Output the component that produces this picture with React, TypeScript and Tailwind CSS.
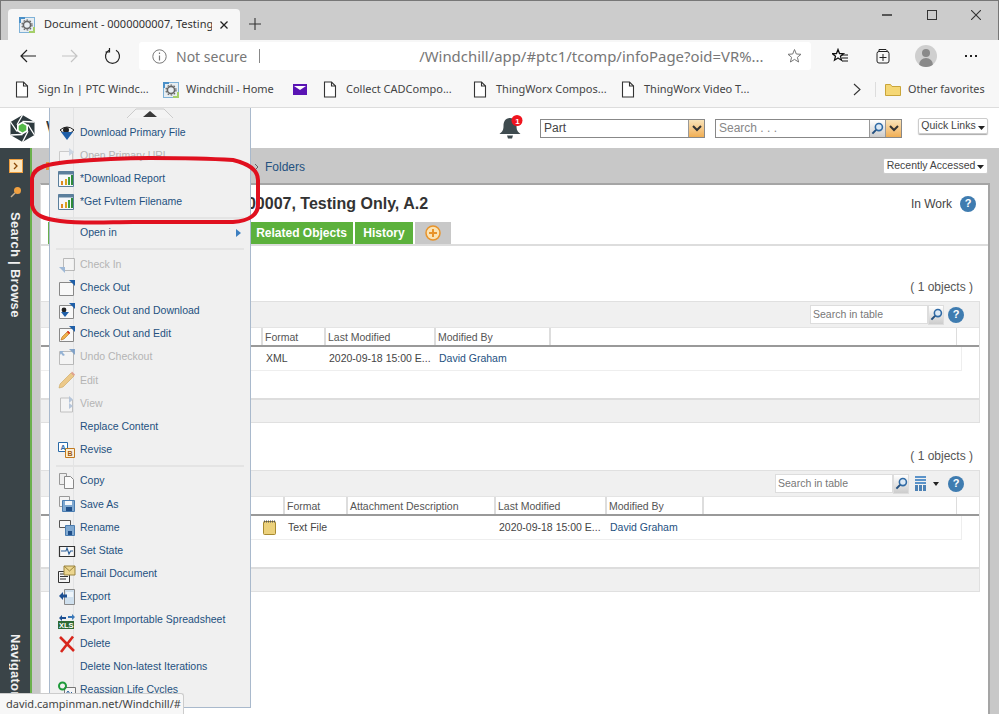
import React from "react";

const Favicon = () => (
  <svg width="16" height="16" viewBox="0 0 16 16" className="shrink-0">
    <rect x="0.5" y="0.5" width="15" height="15" fill="#e8eef2" stroke="#7fb2d8" />
    <path d="M0 0h6v2H2v4H0z" fill="#4a90c8" />
    <path d="M16 16h-6v-2h4v-4h2z" fill="#a5cf6a" />
    <circle cx="8" cy="8" r="3.6" fill="none" stroke="#666" strokeWidth="1.6" />
    <circle cx="8" cy="8" r="5" fill="none" stroke="#666" strokeWidth="1.2" strokeDasharray="1.6 1.6" />
  </svg>
);

const Doc = () => (
  <svg width="14" height="17" viewBox="0 0 14 17" className="shrink-0">
    <path d="M1.500 1h7l4 4v11h-11z" fill="#fff" stroke="#333" strokeWidth="1.100" />
    <path d="M8.500 1v4h4" fill="none" stroke="#333" strokeWidth="1.100" />
  </svg>
);

const Magnifier = () => (
  <svg width="13" height="13" viewBox="0 0 14 14">
    <circle cx="8.500" cy="5.500" r="3.800" fill="#dce9f5" stroke="#2f6aa5" strokeWidth="1.700" />
    <path d="M5.500 8.500 1.500 12.500" stroke="#24507f" strokeWidth="2.200" />
  </svg>
);

const OrangeDrop = () => (
  <div className="flex h-full w-[16px] items-center justify-center border-l border-[#999] bg-gradient-to-b from-[#f9e3b8] to-[#f0ae52]">
    <svg width="10" height="7" viewBox="0 0 10 7">
      <path d="M1 1l4 4 4-4" fill="none" stroke="#333" strokeWidth="2" />
    </svg>
  </div>
);

const Help = () => (
  <div className="flex h-[16px] w-[16px] items-center justify-center rounded-full bg-[#3f7cb0] text-[11px] font-bold leading-none text-white">?</div>
);

const Caret = () => (
  <svg width="7" height="4" viewBox="0 0 7 4" className="ml-[2px] mt-[3px] inline-block align-middle">
    <path d="M0 0h7L3.500 4z" fill="#222" />
  </svg>
);

const S = ({ children }: { children: React.ReactNode }) => (
  <svg width="18" height="18" viewBox="0 0 18 18" className="shrink-0">{children}</svg>
);
const Tri = ({ o = 1 }: { o?: number }) => <path d="M11 1h6v6z" fill="#1f5fa8" opacity={o} />;
const Page = () => <path d="M1.500 3.500h14v13h-14z" fill="#f8f8f8" stroke="#888" />;

const icons: Record<string, React.ReactNode> = {
  download: (
    <S>
      <path d="M2 6q7-6 14 0l-7 6z" fill="#f4f4f4" stroke="#222" />
      <circle cx="8" cy="6" r="3" fill="#222" />
      <path d="M3 8h12l-6 8z" fill="#1f5fa8" />
    </S>
  ),
  url: (
    <S>
      <g opacity=".35">
        <path d="M1.500 4.500h13v11h-13z" fill="#fff" stroke="#888" />
        <path d="M11 1l5 4-5 4z" fill="#8aa8cc" />
      </g>
    </S>
  ),
  chart: (
    <S>
      <path d="M.5 1.500h15v15H.5z" fill="#f5f7fa" stroke="#5b7f9c" />
      <path d="M.5 1.500h15v3H.5z" fill="#5b7f9c" />
      <path d="M3 11h2v4H3z" fill="#e08a1e" />
      <path d="M7 9h2v6H7z" fill="#d9a21f" />
      <path d="M10 7h2v8h-2z" fill="#3fa03f" />
      <path d="M13 5h2v10h-2z" fill="#2e8b3a" />
    </S>
  ),
  checkin: (
    <S>
      <g opacity=".45">
        <path d="M5.500 2.500h11v12h-11z" fill="#fafafa" stroke="#777" />
        <path d="M1 11h6v6z" fill="#3c76b8" />
      </g>
    </S>
  ),
  checkout: (
    <S>
      <Page />
      <Tri />
    </S>
  ),
  checkoutdl: (
    <S>
      <Page />
      <Tri />
      <circle cx="6" cy="8" r="2.400" fill="#222" />
      <path d="M3 10h8l-4 5z" fill="#1f5fa8" />
    </S>
  ),
  checkoutedit: (
    <S>
      <Page />
      <Tri />
      <path d="M3 15l1-3 6-6 2 2-6 6z" fill="#eeb04a" stroke="#b56a18" strokeWidth=".6" />
      <path d="M9 7l2 2 1-1-2-2z" fill="#d22" />
    </S>
  ),
  undo: (
    <S>
      <g opacity=".5">
        <Page />
        <Tri />
        <path d="M2 3l4 0-1.500 1.500L7 7 5 8 3 5.500 2 7z" fill="#3c76b8" />
      </g>
    </S>
  ),
  edit: (
    <S>
      <path d="M1 17l1-4L13 2l3 3L5 16z" fill="#ecc98a" stroke="#c9a45d" strokeWidth=".6" />
      <path d="M13 2l3 3 1-1.500-3-3z" fill="#e0a090" />
    </S>
  ),
  view: (
    <S>
      <g opacity=".45">
        <path d="M2.500 3h9l3 2v12h-12z" fill="#fafafa" stroke="#888" />
        <path d="M11 1l4 3.500-4 3.500z" fill="#6f93c0" />
        <path d="M11 8l4 3-4 3z" fill="#6f93c0" />
      </g>
    </S>
  ),
  revise: (
    <S>
      <path d="M.5 1.500h9v9h-9z" fill="#fff" stroke="#2a6aa8" />
      <path d="M7.500 7.500h9v9h-9z" fill="#fbeed6" stroke="#c07a22" />
      <text x="2.500" y="9" fontSize="7" fontWeight="700" fill="#2a6aa8" fontFamily="Liberation Sans">A</text>
      <text x="9.500" y="15" fontSize="7" fontWeight="700" fill="#a05a10" fontFamily="Liberation Sans">B</text>
    </S>
  ),
  copy: (
    <S>
      <path d="M1.500 1.500h7v11h-7z" fill="#eee" stroke="#999" />
      <path d="M6.500 4.500h6l3 3v9h-9z" fill="#fafafa" stroke="#888" />
    </S>
  ),
  saveas: (
    <S>
      <path d="M1.500 1.500h10v10h-10z" fill="#f4f4f4" stroke="#999" />
      <path d="M4.500 5.500h12v11h-12z" fill="#7fa8d0" stroke="#4a7cb0" />
      <path d="M7 6h7v4H7z" fill="#f4f7fb" />
      <path d="M8 12h6v4H8z" fill="#1f4f8a" />
    </S>
  ),
  rename: (
    <S>
      <path d="M1.500 1.500h11v7h-11z" fill="#f7f7f7" stroke="#555" />
      <path d="M7.500 6.500h9v10h-9z" fill="#7fa8d0" stroke="#4a7cb0" />
      <path d="M10 12h4v4h-4z" fill="#1f4f8a" />
    </S>
  ),
  state: (
    <S>
      <path d="M1.500 4.500h15v10h-15z" fill="#f7f7f7" stroke="#333" strokeWidth="1.200" />
      <path d="M3 9h5l1-3 2 6 1.500-3H15" fill="none" stroke="#2a5f99" strokeWidth="1.100" />
    </S>
  ),
  email: (
    <S>
      <path d="M.5 6.500h11v11H.5z" fill="#f5f5f5" stroke="#333" />
      <path d="M2 9h8M2 11.500h8M2 14h6" stroke="#333" />
      <path d="M6 1h11v9H6z" fill="#ecd68f" stroke="#9a8440" />
      <path d="M6 1l5.500 5L17 1" fill="none" stroke="#9a8440" />
    </S>
  ),
  export: (
    <S>
      <path d="M6.500 1.500h10v15h-10z" fill="#cfe0ee" stroke="#888" />
      <path d="M8 4h7v5H8z" fill="#eef5fa" />
      <path d="M1 8l4-4v2.500h4v3H5V12z" fill="#1b4f92" />
    </S>
  ),
  xls: (
    <S>
      <path d="M1 7l3-3v2h4v2H4v2z" fill="#1b4f92" />
      <path d="M17 6l-3-3v2h-4v2h4v2z" fill="#3a78b8" />
      <rect x="0" y="10" width="16" height="8" fill="#2e6a35" />
      <text x="1" y="17" fontSize="7.500" fontWeight="700" fill="#fff" fontFamily="Liberation Sans">XLS</text>
    </S>
  ),
  del: (
    <S>
      <path d="M2 2l14 14M15 1.500 3 17" stroke="#d8261c" strokeWidth="2.600" />
    </S>
  ),
  life: (
    <S>
      <path d="M6.500 6.500h11v10h-11z" fill="#f4f4f4" stroke="#777" />
      <path d="M8 13l2-3 2 3 2-2" fill="none" stroke="#2a5f99" />
      <circle cx="4.500" cy="5" r="3.500" fill="none" stroke="#1e9a3a" strokeWidth="2" />
    </S>
  ),
};

type Entry = { t: string; i?: string; off?: boolean; sub?: boolean } | "sep";

const menu: Entry[] = [
  { t: "Download Primary File", i: "download" },
  { t: "Open Primary URL", i: "url", off: true },
  { t: "*Download Report", i: "chart" },
  { t: "*Get FvItem Filename", i: "chart" },
  "sep",
  { t: "Open in", sub: true },
  "sep",
  { t: "Check In", i: "checkin", off: true },
  { t: "Check Out", i: "checkout" },
  { t: "Check Out and Download", i: "checkoutdl" },
  { t: "Check Out and Edit", i: "checkoutedit" },
  { t: "Undo Checkout", i: "undo", off: true },
  { t: "Edit", i: "edit", off: true },
  { t: "View", i: "view", off: true },
  { t: "Replace Content" },
  { t: "Revise", i: "revise" },
  "sep",
  { t: "Copy", i: "copy" },
  { t: "Save As", i: "saveas" },
  { t: "Rename", i: "rename" },
  { t: "Set State", i: "state" },
  { t: "Email Document", i: "email" },
  { t: "Export", i: "export" },
  { t: "Export Importable Spreadsheet", i: "xls" },
  { t: "Delete", i: "del" },
  { t: "Delete Non-latest Iterations" },
  { t: "Reassign Life Cycles", i: "life" },
];

const ContextMenu = () => (
  <div className="absolute left-[49px] top-[108px] z-10 h-[600px] w-[202px] overflow-hidden border-x border-b border-x-[#a9b9cc] border-b-[#a9b9cc] bg-[#f0f0f0]">
    <div className="absolute bottom-0 left-[23px] top-0 w-px bg-[#e2e3e4]" />
    <div className="relative flex h-[13px] justify-center">
      <svg width="46" height="11" viewBox="0 0 46 11">
        <path d="M0 10 9 1h28l9 9" fill="#f4f4f4" stroke="#ccc" />
        <path d="M16 9 23 3l7 6z" fill="#3a3a3a" />
      </svg>
    </div>
    {menu.map((m, idx) =>
      m === "sep" ? (
        <div key={idx} className="relative flex h-[8px] items-center px-[6px]">
          <div className="h-[2px] w-full bg-[#e4e4e4]" />
        </div>
      ) : (
        <div key={idx} className="relative flex h-[23.2px] items-center">
          <div className="flex w-[30px] justify-end pr-[4px]">{m.i ? icons[m.i] : null}</div>
          <span className={`whitespace-nowrap text-[10.5px] ${m.off ? "text-[#b4b4b4]" : "text-[#24517f]"}`}>{m.t}</span>
          {m.sub ? (
            <div className="absolute right-[9px] h-0 w-0 border-y-[4px] border-l-[5px] border-y-transparent border-l-[#3c7fc0]" />
          ) : null}
        </div>
      ),
    )}
  </div>
);

type Col = { t: string; w: number };

const Section = ({
  cols,
  first,
  cells,
  grid,
  noteIcon,
}: {
  cols: Col[];
  first: number;
  cells: { t: string; link?: boolean }[];
  grid?: boolean;
  noteIcon?: boolean;
}) => (
  <div>
    <div className="flex h-[16px] items-center justify-end pr-[15px] text-[12px] text-[#555]">( 1 objects )</div>
    <div className="mr-[8px] mt-[6px] border-y border-r border-[#e0e0e0]">
      <div className="flex h-[25px] items-center justify-end bg-[#f0f0f0] pr-[15px]">
        <div className="flex h-[19px] w-[118px] items-center border border-[#ddd] bg-white px-[2px] text-[10.5px] text-[#777]">Search in table</div>
        <div className="flex h-[20px] w-[16px] items-center justify-center border border-[#ddd] bg-gradient-to-b from-white to-[#ccc]">
          <Magnifier />
        </div>
        {grid ? (
          <div className="ml-[6px] flex items-center">
            <svg width="11" height="15" viewBox="0 0 11 15">
              <path d="M0 0h11v2H0zM0 3h11v2H0zM0 6h11v2H0z" fill="#5b93c9" />
              <path d="M0 9h3v6H0zM4 9h3v6H4zM8 9h3v6H8z" fill="#4d82b5" />
            </svg>
            <svg width="6" height="4" viewBox="0 0 6 4" className="ml-[7px]">
              <path d="M0 0h6L3 4z" fill="#222" />
            </svg>
          </div>
        ) : null}
        <div className={grid ? "ml-[9px]" : "ml-[4px]"}>
          <Help />
        </div>
      </div>
      <div className="flex h-[20px] border-b-2 border-t border-[#e4e4e4] border-b-[#999] bg-white text-[10.5px] text-[#555]">
        <div style={{ width: first }} className="shrink-0 border-r-2 border-[#ddd]" />
        {cols.map((c) => (
          <div key={c.t} style={{ width: c.w }} className="flex shrink-0 items-center border-r-2 border-[#ddd] pl-[2px] pt-[2px]">{c.t}</div>
        ))}
        <div className="mr-[22px] flex-1 border-r border-[#ddd]" />
      </div>
      <div className="h-[51px] bg-white">
        <div className="mr-[17px] flex h-[24px] items-center border-b border-r border-[#eee] text-[10.5px] text-[#444]">
          <div style={{ width: first }} className="flex shrink-0 items-center justify-end pr-[9px]">
            {noteIcon ? (
              <svg width="13" height="15" viewBox="0 0 13 15">
                <rect x=".5" y="1.500" width="12" height="13" rx="1" fill="#ecd17c" stroke="#a88a30" />
                <path d="M1 1.500h11" stroke="#555" strokeDasharray="1 1" strokeWidth="2" />
              </svg>
            ) : null}
          </div>
          {cells.map((c, i) => (
            <div key={i} style={{ width: cols[i].w }} className={`shrink-0 overflow-hidden whitespace-nowrap pl-[3px] ${c.link ? "text-[#24517f]" : ""}`}>{c.t}</div>
          ))}
        </div>
      </div>
      <div className="h-[24px] border-t-2 border-[#ddd] bg-[#f0f0f0]" />
    </div>
  </div>
);

export default function App() {
  return (
    <div className="relative flex h-[714px] w-[999px] flex-col overflow-hidden bg-white [font-family:'Liberation_Sans',Arial,sans-serif]">
      {/* browser chrome */}
      <div className="[font-family:'Noto_Sans','Open_Sans',sans-serif]">
        <div className="flex h-[40px] items-end border-l border-r border-t border-[#777] bg-[#cccccc]">
          <div className="ml-[7px] flex h-[31px] w-[232px] items-center rounded-t-[4px] bg-[#f7f7f7] pl-[11px] text-[11px] text-[#333]">
            <Favicon />
            <span className="ml-[9px] w-[168px] overflow-hidden whitespace-nowrap">Document - 0000000007, Testing</span>
            <svg width="10" height="10" viewBox="0 0 10 10" className="ml-[7px]">
              <path d="M1.500 1.500l7 7M8.500 1.500l-7 7" stroke="#222" strokeWidth="1.300" />
            </svg>
          </div>
          <svg width="14" height="14" viewBox="0 0 14 14" className="mb-[9px] ml-[8px]">
            <path d="M7 1v12M1 7h12" stroke="#333" strokeWidth="1.100" />
          </svg>
          <div className="mb-[20px] ml-auto flex items-center">
            <div className="h-[2px] w-[10px] bg-[#555]" />
            <div className="ml-[35px] h-[10px] w-[10px] border-[1.5px] border-[#333]" />
            <svg width="10" height="10" viewBox="0 0 10 10" className="ml-[34px] mr-[17px]">
              <path d="M0 0l10 10M10 0 0 10" stroke="#333" strokeWidth="1.100" />
            </svg>
          </div>
        </div>
        <div className="flex h-[32px] items-center bg-[#f7f7f7] pl-[20px]">
          <svg width="16" height="14" viewBox="0 0 16 14">
            <path d="M16 7H1M7 1 1 7l6 6" fill="none" stroke="#222" strokeWidth="1.200" />
          </svg>
          <svg width="16" height="14" viewBox="0 0 16 14" className="ml-[26px]">
            <path d="M0 7h15M9 1l6 6-6 6" fill="none" stroke="#c4c4c4" strokeWidth="1.200" />
          </svg>
          <svg width="17" height="17" viewBox="0 0 17 17" className="ml-[26px]">
            <path d="M5 2.300a7 7 0 1 0 7 0" fill="none" stroke="#222" strokeWidth="1.200" />
            <path d="M5.500 1v4H1.500" fill="none" stroke="#222" strokeWidth="1.200" transform="translate(0 -1)" />
          </svg>
          <div className="ml-[18px] flex h-[28px] w-[672px] items-center rounded-[3px] bg-white pl-[13px] text-[#777]">
            <svg width="15" height="15" viewBox="0 0 15 15">
              <circle cx="7.500" cy="7.500" r="6.700" fill="none" stroke="#777" />
              <path d="M7.500 6.500v5M7.500 3.500v1.500" stroke="#777" strokeWidth="1.200" />
            </svg>
            <span className="ml-[9px] text-[14px]">Not secure</span>
            <div className="ml-[12px] h-[14px] w-px bg-[#888]" />
            <span className="ml-[159px] whitespace-nowrap text-[14.9px]">/Windchill/app/#ptc1/tcomp/infoPage?oid=VR%...</span>
            <svg width="16" height="16" viewBox="0 0 16 16" className="ml-[23px]">
              <path d="M7.500 1.500 9.300 6l4.700.3-3.600 3 1.200 4.700-4.100-2.600L3.400 14l1.200-4.700L1 6.300 5.700 6z" fill="none" stroke="#777" />
            </svg>
          </div>
          <svg width="16" height="16" viewBox="0 0 16 16" className="ml-[21px]">
            <path d="M6 1.500 7.500 5.500l4 .2-3 2.600 1 3.900L6 10l-3.500 2.200 1-3.900-3-2.600 4-.2z" fill="#fff" stroke="#111" strokeWidth="1.300" />
            <path d="M10 7h6M10 10h6M10 13h6" stroke="#111" />
          </svg>
          <svg width="16" height="16" viewBox="0 0 16 16" className="ml-[28px]">
            <path d="M3 3.500V1.500h7l2 2" fill="none" stroke="#222" />
            <rect x="1" y="3.500" width="12" height="11.500" rx="2" fill="none" stroke="#222" />
            <path d="M7 6v7M3.500 9.500h7" stroke="#222" />
          </svg>
          <div className="relative ml-[23px] h-[22px] w-[22px] overflow-hidden rounded-full bg-[#cfcfcf]">
            <div className="absolute left-[7px] top-[4px] h-[8px] w-[8px] rounded-full bg-[#8a8a8a]" />
            <div className="absolute left-[4px] top-[13px] h-[10px] w-[14px] rounded-t-[7px] bg-[#8a8a8a]" />
          </div>
          <div className="ml-[28px] flex gap-[3px]">
            <div className="h-[2px] w-[2px] bg-[#222]" />
            <div className="h-[2px] w-[2px] bg-[#222]" />
            <div className="h-[2px] w-[2px] bg-[#222]" />
          </div>
        </div>
        <div className="flex h-[36px] items-center border-b border-[#ddd] bg-[#f7f7f7] pl-[15px] text-[11px] text-[#444]">
          <Doc />
          <span className="ml-[9px] w-[125px] whitespace-nowrap">Sign In | PTC Windc...</span>
          <Favicon />
          <span className="ml-[7px] w-[107px] whitespace-nowrap">Windchill - Home</span>
          <svg width="14" height="11" viewBox="0 0 14 11">
            <rect width="14" height="11" fill="#5a14b4" />
            <path d="M1 2l6 4 6-4" fill="#fff" />
          </svg>
          <div className="ml-[16px]"><Doc /></div>
          <span className="ml-[9px] w-[127px] whitespace-nowrap">Collect CADCompo...</span>
          <Doc />
          <span className="ml-[9px] w-[125px] whitespace-nowrap">ThingWorx Compos...</span>
          <Doc />
          <span className="ml-[9px] w-[209px] whitespace-nowrap">ThingWorx Video T...</span>
          <svg width="8" height="13" viewBox="0 0 8 13">
            <path d="M1 1l6 5.500-6 5.500" fill="none" stroke="#333" strokeWidth="1.100" />
          </svg>
          <div className="ml-[14px] h-[15px] w-px bg-[#ddd]" />
          <svg width="16" height="13" viewBox="0 0 16 13" className="ml-[9px]">
            <path d="M.5 1.500h5l1.500 2h8.500v9H.5z" fill="#f5d775" stroke="#c9a53a" />
          </svg>
          <span className="ml-[7px] whitespace-nowrap text-[10.8px]">Other favorites</span>
        </div>
      </div>

      {/* app header */}
      <div className="flex h-[40px] items-center bg-white pl-[9px]">
        <svg width="27" height="29" viewBox="0 0 27 29" className="shrink-0">
          <path d="M13.500 1 25.500 8v13l-12 7-12-7V8z" fill="#2d3a3e" />
          <path d="M13.500 7.500 19 10.700v6.600l-5.500 3.200L8 17.300v-6.600z" fill="#fff" />
          <path d="M13.500 9.500l3.800 2.200v4.600l-3.800 2.200-3.800-2.200v-4.600z" fill="#54b948" />
          <path d="M13.500 1 8 10.700M25.500 8 13.500 7.500M25.500 21 19 10.700M13.500 28 19 17.300M1.500 21 13.500 20.500M1.500 8 8 17.300" stroke="#fff" strokeWidth="1.300" />
        </svg>
        <div className="ml-[10px] h-[24px] w-[30px] shrink-0 overflow-hidden text-[20px] leading-[24px] text-[#2d3a3e]">Windchill</div>
        <svg width="24" height="25" viewBox="0 0 24 25" className="ml-[423px] mt-[-1px] shrink-0">
          <path d="M11 3c5 0 6.500 4 6.500 8s1 5.500 4 8H.5c3-2.500 4-4 4-8S6 3 11 3z" fill="#3f4b4f" />
          <path d="M8 20.500h6l-1 3H9z" fill="#3f4b4f" />
          <circle cx="18" cy="5.500" r="5.500" fill="#f0141e" />
          <text x="16.300" y="8.500" fontSize="8" fontWeight="700" fill="#fff" fontFamily="Liberation Sans">1</text>
        </svg>
        <div className="ml-[17px] flex h-[19px] w-[165px] items-center border border-[#888] bg-white text-[12px] text-[#444]">
          <span className="flex-1 pl-[3px]">Part</span>
          <OrangeDrop />
        </div>
        <div className="ml-[10px] flex h-[19px] w-[187px] items-center border border-[#888] bg-white text-[12px] text-[#888]">
          <span className="flex-1 pl-[3px]">Search . . .</span>
          <div className="flex h-full w-[16px] items-center justify-center border-l border-[#999] bg-gradient-to-b from-white to-[#ccc]">
            <Magnifier />
          </div>
          <OrangeDrop />
        </div>
        <div className="mb-[4px] ml-[16px] flex h-[16px] w-[70px] items-center justify-center rounded-[2px] border border-[#ccc] text-[10.5px] text-[#444] shadow-[0_1px_1px_#aaa]">
          Quick Links<Caret />
        </div>
      </div>

      {/* body */}
      <div className="flex min-h-0 flex-1">
        <div className="flex w-[32px] shrink-0 flex-col items-center border-r-2 border-[#6ab04c] bg-[#3a4448] pb-[20px] pl-[1px]">
          <div className="mt-[11px] flex h-[14px] w-[14px] items-center justify-center border border-[#f0a040] bg-[#fbe7c0]">
            <svg width="8" height="8" viewBox="0 0 8 8">
              <path d="M2 1l3 3-3 3" fill="none" stroke="#8a4a08" strokeWidth="1.300" />
            </svg>
          </div>
          <svg width="12" height="13" viewBox="0 0 12 13" className="mt-[13px]">
            <circle cx="7.500" cy="4.500" r="3.500" fill="#f0a040" />
            <path d="M5 7 1 11" stroke="#c8b090" strokeWidth="1.500" />
          </svg>
          <div className="mt-[13px] whitespace-nowrap text-[13px] font-bold leading-none tracking-[0.3px] text-[#f0f0f0] [writing-mode:vertical-rl]">Search | Browse</div>
          <div className="mt-auto h-[60px] overflow-hidden whitespace-nowrap text-[13px] font-bold leading-none tracking-[0.3px] text-[#f0f0f0] [writing-mode:vertical-rl]">Navigator</div>
        </div>

        <div className="flex min-w-0 flex-1 flex-col bg-[#c8c8c8]">
          <div className="flex h-[35px] shrink-0 items-center pl-[14px] pr-[11px]">
            <div className="h-[8px] w-[5px] bg-[#e79a3a]" />
            <svg width="5" height="8" viewBox="0 0 5 8" className="ml-[203px] mt-[2px]">
              <path d="M1 1l3 3-3 3" fill="none" stroke="#666" />
            </svg>
            <span className="ml-[6px] mt-[2px] text-[12px] text-[#24517f]">Folders</span>
            <div className="ml-auto flex h-[16px] w-[105px] items-center justify-center rounded-[2px] border border-[#ccc] bg-white text-[10.5px] text-[#444]">
              Recently Accessed<Caret />
            </div>
          </div>
          <div className="ml-[8px] mr-[9px] flex-1 border-l border-r-2 border-t-2 border-[#a5a5a5] border-l-[#dcdcdc] bg-white">
            <div className="flex h-[37px] items-center pr-[12px]">
              <span className="ml-[69px] whitespace-nowrap text-[16px] font-bold text-[#333]">Document - 0000000007, Testing Only, A.2</span>
              <span className="ml-auto text-[12px] text-[#444]">In Work</span>
              <div className="ml-[8px]"><Help /></div>
            </div>
            <div className="flex h-[24px] border-b-2 border-[#ddd]">
              <div className="ml-[7px] h-[22px] w-[2px] bg-[#6ab04c]" />
              <div className="ml-[200px] flex h-[22px] w-[103px] items-center justify-center bg-[#5cb13c] text-[12px] font-bold text-white">Related Objects</div>
              <div className="ml-[2px] flex h-[22px] w-[58px] items-center justify-center bg-[#5cb13c] text-[12px] font-bold text-white">History</div>
              <div className="ml-[2px] flex h-[22px] w-[36px] items-center justify-center bg-[#c8c8c8]">
                <svg width="16" height="16" viewBox="0 0 16 16">
                  <circle cx="8" cy="8" r="7" fill="#fbe3b3" stroke="#e8932a" strokeWidth="1.500" />
                  <path d="M8 4v8M4 8h8" stroke="#e8932a" strokeWidth="2" />
                </svg>
              </div>
            </div>
            <div className="mt-[33px]">
              <Section
                first={222}
                cols={[
                  { t: "Format", w: 63 },
                  { t: "Last Modified", w: 110 },
                  { t: "Modified By", w: 115 },
                ]}
                cells={[{ t: "XML" }, { t: "2020-09-18 15:00 E..." }, { t: "David Graham", link: true }]}
              />
            </div>
            <div className="mt-[25px]">
              <Section
                grid
                noteIcon
                first={244}
                cols={[
                  { t: "Format", w: 63 },
                  { t: "Attachment Description", w: 148 },
                  { t: "Last Modified", w: 111 },
                  { t: "Modified By", w: 97 },
                ]}
                cells={[{ t: "Text File" }, { t: "" }, { t: "2020-09-18 15:00 E..." }, { t: "David Graham", link: true }]}
              />
            </div>
          </div>
        </div>
      </div>

      <ContextMenu />

      {/* hand-drawn annotation */}
      <svg width="240" height="80" viewBox="28 152 240 80" className="absolute left-[28px] top-[152px] z-20">
        <path
          d="M67 162 C50 164 34 166 32 178 L32 205 C34 216 45 219 60 221 C85 224 110 222 133 222 L233 222 C250 221 258 214 258 205 L258 180 C258 170 250 164 233 160 C200 158 180 158 150 158 C120 158 90 160 67 162 Z"
          fill="none"
          stroke="#e0101f"
          strokeWidth="4"
        />
      </svg>

      <div className="absolute bottom-0 left-0 z-30 flex h-[21px] w-[184px] items-center rounded-tr-[3px] border-r border-t border-[#ccc] bg-[#f7f7f7] pl-[6px] text-[11px] text-[#444] [font-family:'Noto_Sans',sans-serif]">
        david.campinman.net/Windchill/#
      </div>
    </div>
  );
}
